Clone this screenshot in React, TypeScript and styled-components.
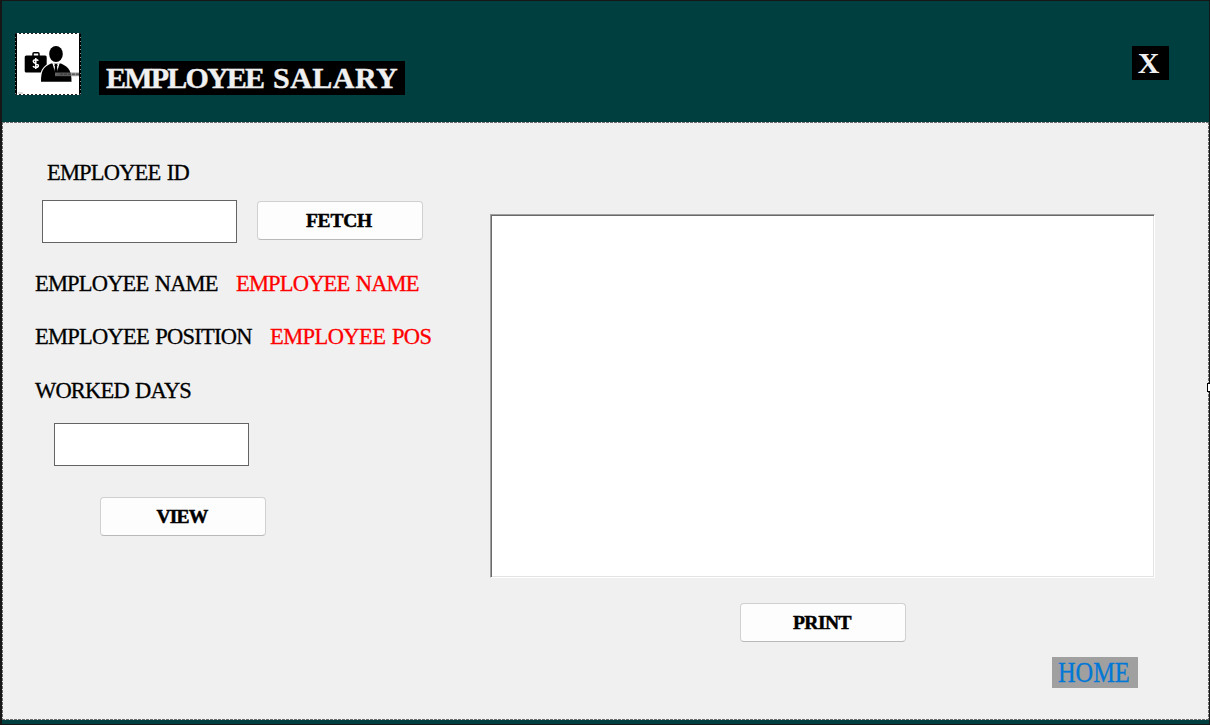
import React from "react";
import styled, { createGlobalStyle } from "styled-components";

const Global = createGlobalStyle`
  * { box-sizing: border-box; }
  body { margin: 0; background: #000; overflow: hidden; }
  button, input, textarea { font: inherit; }
`;

const dash = "repeating-linear-gradient(90deg, #6b6b6b 0 3px, #efefef 3px 4px)";
const dashV = "repeating-linear-gradient(180deg, #6b6b6b 0 3px, #efefef 3px 4px)";

const Frame = styled.div`
  width: 1210px;
  height: 725px;
  display: flex;
  flex-direction: column;
  background: #003f3f;
  border: solid #161616;
  border-width: 1px 1px 1px 2px;
  font-family: Algerian, "Liberation Serif", serif;
  color: #000;
`;

const Header = styled.header`
  height: 121px;
  flex: none;
  display: flex;
  align-items: flex-start;
  padding: 32px 40px 0 12px;
`;

const Logo = styled.svg`
  width: 68px;
  height: 62px;
  flex: none;
`;

const Title = styled.h1`
  margin: 28px auto 0 17px;
  width: 306px;
  height: 34px;
  padding-left: 7px;
  background: #000;
  color: #f0f0f0;
  font-size: 30px;
  line-height: 34px;
  font-weight: bold;
  letter-spacing: -1.8px;
  word-spacing: 4px;
  white-space: nowrap;
  -webkit-text-stroke: 0.4px currentColor;
`;

const Wide = styled.span`
  letter-spacing: 0.5px;
`;

const Close = styled.button`
  margin: 13px 0 0;
  width: 37px;
  height: 34px;
  padding: 0 4px 0 0;
  border: 0;
  background: #000;
  color: #f0f0f0;
  font-size: 30px;
  line-height: 34px;
  font-weight: bold;
`;

const Panel = styled.main`
  height: 598px;
  flex: none;
  display: flex;
  align-items: flex-start;
  background:
    ${dash} top / 100% 1px no-repeat,
    ${dash} bottom / 100% 1px no-repeat,
    ${dashV} left / 1px 100% no-repeat,
    ${dashV} right / 1px 100% no-repeat,
    #f0f0f0;
`;

const Form = styled.section`
  width: 488px;
  padding: 38px 0 0 33px;
  display: flex;
  flex-direction: column;
`;

const Line = styled.div<{ $top?: number; $left?: number; $gap?: number }>`
  display: flex;
  align-items: flex-start;
  gap: ${(p) => p.$gap ?? 0}px;
  margin-top: ${(p) => p.$top ?? 0}px;
  margin-left: ${(p) => p.$left ?? 0}px;
`;

const Label = styled.span<{ $width?: number; $track?: number; $value?: boolean }>`
  width: ${(p) => (p.$width ? `${p.$width}px` : "auto")};
  color: ${(p) => (p.$value ? "#ff0000" : "#000")};
  font-size: 22.5px;
  line-height: 26px;
  letter-spacing: ${(p) => p.$track ?? -0.82}px;
  word-spacing: 1.5px;
  white-space: nowrap;
  -webkit-text-stroke: 0.3px currentColor;
`;

const Field = styled.input`
  width: 195px;
  height: 43px;
  padding: 0 8px;
  border: 1px solid #646464;
  border-radius: 0;
  background: #fff;
  outline: none;
`;

const Button = styled.button<{ $track?: number }>`
  width: 166px;
  height: 39px;
  padding: 1px 2px 0 0;
  border: 1px solid #d0d0d0;
  border-bottom-color: #b9b9b9;
  border-radius: 4px;
  background: #fdfdfd;
  color: #000;
  font-size: 19.5px;
  line-height: 36px;
  font-weight: bold;
  letter-spacing: ${(p) => p.$track ?? -0.5}px;
  -webkit-text-stroke: 0.5px currentColor;
`;

const Output = styled.section`
  width: 665px;
  padding-top: 92px;
  display: flex;
  flex-direction: column;
`;

const Slip = styled.div`
  height: 364px;
  border: 1px solid;
  border-color: #a0a0a0 #fff #fff #a0a0a0;
  background: #fff;
  box-shadow: inset 1px 1px #696969, inset -1px -1px #e3e3e3;
`;

const Home = styled.a`
  align-self: flex-end;
  margin: 15px 17px 0 0;
  width: 86px;
  height: 31px;
  padding-left: 6px;
  background: #a0a0a0;
  color: #0078d7;
  font-size: 29px;
  line-height: 31px;
  white-space: nowrap;
`;

const Narrow = styled.span`
  display: inline-block;
  transform: scaleX(0.84);
  transform-origin: left;
  -webkit-text-stroke: 0.3px currentColor;
`;

const Grip = styled.i`
  position: absolute;
  left: 1207px;
  top: 383px;
  width: 8px;
  height: 9px;
  background: #fff;
  border: 1px solid #000;
`;

function SalaryLogo() {
  return (
    <Logo viewBox="0 0 68 62">
      <path fill="#000" d="M1 0h66v62H1z" />
      <path fill="#fff" d="M3 0h62v62H3z" />
      <path
        d="M1.500 0v62M66.500 0v62"
        fill="none"
        stroke="#888"
        strokeDasharray="1 3"
      />
      <path
        d="M1 .5h66M1 61.500h66"
        fill="none"
        stroke="#222"
        strokeDasharray="2 2"
      />
      <path d="M19 23v-2.300q0-.9 1-.9h4q1 0 1 .9V23" fill="none" stroke="#000" strokeWidth="1.500" />
      <rect x="10.700" y="22.500" width="22" height="17" rx="1.600" />
      <path
        d="M24.200 27.700c-.6-1.400-4.900-1.500-4.900.9 0 2.300 5.100 1.300 5.100 3.900 0 2.400-4.600 2.400-5.300.4M21.800 25v11"
        fill="none"
        stroke="#fff"
        strokeWidth="1.500"
      />
      <path
        d="M27 48.700c0-10 1.500-14.500 10-18.200h10c8.500 3.700 10.500 8.200 10.500 18.200z"
        stroke="#fff"
        strokeWidth="2.200"
        paintOrder="stroke"
      />
      <ellipse cx="42" cy="21" rx="6.800" ry="8" stroke="#fff" strokeWidth="1.600" paintOrder="stroke" />
      <path d="M38.200 29.500L42 42.500l3.800-13Q42 32 38.200 29.500z" fill="#fff" />
      <path d="M40.800 31h2.400l.4 1.500-.6 1.200.8 5L42 42l-1.800-3.300.8-5-.6-1.200z" />
      <path fill="#777" fillOpacity=".75" d="M41 39.500h24v3.700H41z" />
      <path d="M46 41.300h19" stroke="#333" strokeOpacity=".6" strokeWidth="1.500" strokeDasharray="3 1" />
      <path d="M4 60h5" stroke="#999" strokeWidth=".7" />
    </Logo>
  );
}

export default function App() {
  return (
    <>
      <Global />
      <Frame>
        <Header>
          <SalaryLogo />
          <Title>
            EMPLOYEE <Wide>SALARY</Wide>
          </Title>
          <Close>X</Close>
        </Header>
        <Panel>
          <Form>
            <Line $left={12}>
              <Label>EMPLOYEE ID</Label>
            </Line>
            <Line $top={14} $left={7} $gap={20}>
              <Field aria-label="Employee ID" />
              <Line $top={1}>
                <Button $track={-0.2}>FETCH</Button>
              </Line>
            </Line>
            <Line $top={28}>
              <Label $width={201}>EMPLOYEE NAME</Label>
              <Label $value>EMPLOYEE NAME</Label>
            </Line>
            <Line $top={27}>
              <Label $width={235} $track={-0.76}>EMPLOYEE POSITION</Label>
              <Label $value $track={-0.58}>EMPLOYEE POS</Label>
            </Line>
            <Line $top={28}>
              <Label>WORKED DAYS</Label>
            </Line>
            <Line $top={19} $left={19}>
              <Field aria-label="Worked days" />
            </Line>
            <Line $top={31} $left={65}>
              <Button $track={-0.8}>VIEW</Button>
            </Line>
          </Form>
          <Output>
            <Slip />
            <Line $top={25} $left={250}>
              <Button>PRINT</Button>
            </Line>
            <Home>
              <Narrow>HOME</Narrow>
            </Home>
          </Output>
        </Panel>
        <Grip />
      </Frame>
    </>
  );
}
